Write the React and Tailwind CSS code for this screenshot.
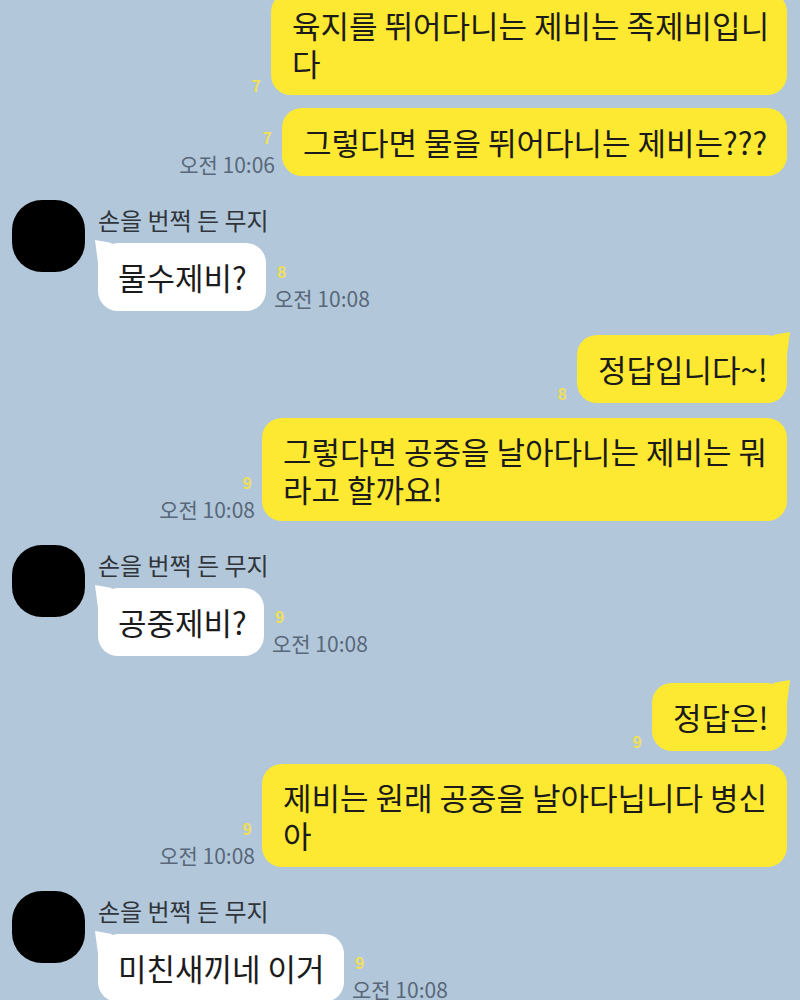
import React from 'react';

function Tail({ side, color }) {
  if (side === 'right') {
    return (
      <svg className="absolute right-[-3px] top-[-3px] w-[17px] h-[23px]" viewBox="0 0 17 23">
        <polygon points="0,3 17,0 14,23" fill={color} />
      </svg>
    );
  }
  return (
    <svg className="absolute left-[-3px] top-[-3px] w-[17px] h-[23px]" viewBox="0 0 17 23">
      <polygon points="17,3 0,0 3,23" fill={color} />
    </svg>
  );
}

function MyMessage({ lines, width, unread, time, tail, className = '' }) {
  const pad = lines.length > 1 ? 'pt-[14px] pb-[13px]' : 'pt-[15px] pb-[15px]';
  return (
    <div className={`flex justify-end items-end gap-[7px] pr-[13px] ${className}`}>
      <div className={`flex flex-col items-end ${time ? 'pb-[1px]' : 'pb-[2px]'}`}>
        {unread && (
          <span className={`text-[16px] leading-[16px] font-bold text-[#efdf5a] pr-[3px] ${time ? 'mb-[9px]' : ''}`}>
            {unread}
          </span>
        )}
        {time && <span className="text-[21px] leading-[21px] text-[#58687a] whitespace-nowrap">{time}</span>}
      </div>
      <div className={`relative bg-[#fde931] rounded-[20px] px-[21px] ${pad} text-[31px] leading-[38px] text-[#1b1b1b] ${width}`}>
        {tail && <Tail side="right" color="#fde931" />}
        {lines.map((l, i) => (
          <div key={i} className="relative whitespace-nowrap">{l}</div>
        ))}
      </div>
    </div>
  );
}

function FriendMessage({ text, width, unread, time, className = '' }) {
  return (
    <div className={`flex gap-[13px] pl-[12px] ${className}`}>
      <div className="w-[73px] h-[72px] rounded-[30px] bg-black shrink-0" />
      <div className="flex flex-col">
        <div className="mt-[7px] text-[24px] leading-[26px] text-[#2f353b] whitespace-nowrap">손을 번쩍 든 무지</div>
        <div className="flex items-end gap-[8px] mt-[10px]">
          <div className={`relative bg-white rounded-[20px] px-[20px] pt-[15px] pb-[15px] text-[31px] leading-[38px] text-[#1b1b1b] ${width}`}>
            <Tail side="left" color="#ffffff" />
            <div className="relative whitespace-nowrap">{text}</div>
          </div>
          <div className="flex flex-col items-start pb-[2px]">
            <span className="text-[16px] leading-[16px] font-bold text-[#efdf5a] mb-[9px] pl-[3px]">{unread}</span>
            <span className="text-[21px] leading-[21px] text-[#58687a] whitespace-nowrap">{time}</span>
          </div>
        </div>
      </div>
    </div>
  );
}

export default function App() {
  return (
    <div className="w-[800px] h-[1000px] overflow-hidden bg-[#b2c7d9] font-['Noto_Sans_CJK_KR','Noto_Sans',sans-serif]">
      <MyMessage
        className="mt-[-8px]"
        width="w-[516px]"
        lines={['육지를 뛰어다니는 제비는 족제비입니', '다']}
        unread="7"
      />
      <MyMessage
        className="mt-[13px]"
        width="w-[505px]"
        lines={['그렇다면 물을 뛰어다니는 제비는???']}
        unread="7"
        time="오전 10:06"
      />
      <FriendMessage className="mt-[24px]" width="w-[168px]" text="물수제비?" unread="8" time="오전 10:08" />
      <MyMessage className="mt-[24px]" width="w-[210px]" lines={['정답입니다~!']} unread="8" tail />
      <MyMessage
        className="mt-[15px]"
        width="w-[525px]"
        lines={['그렇다면 공중을 날아다니는 제비는 뭐', '라고 할까요!']}
        unread="9"
        time="오전 10:08"
      />
      <FriendMessage className="mt-[24px]" width="w-[166px]" text="공중제비?" unread="9" time="오전 10:08" />
      <MyMessage className="mt-[27px]" width="w-[135px]" lines={['정답은!']} unread="9" tail />
      <MyMessage
        className="mt-[13px]"
        width="w-[525px]"
        lines={['제비는 원래 공중을 날아다닙니다 병신', '아']}
        unread="9"
        time="오전 10:08"
      />
      <FriendMessage className="mt-[24px]" width="w-[246px]" text="미친새끼네 이거" unread="9" time="오전 10:08" />
    </div>
  );
}
